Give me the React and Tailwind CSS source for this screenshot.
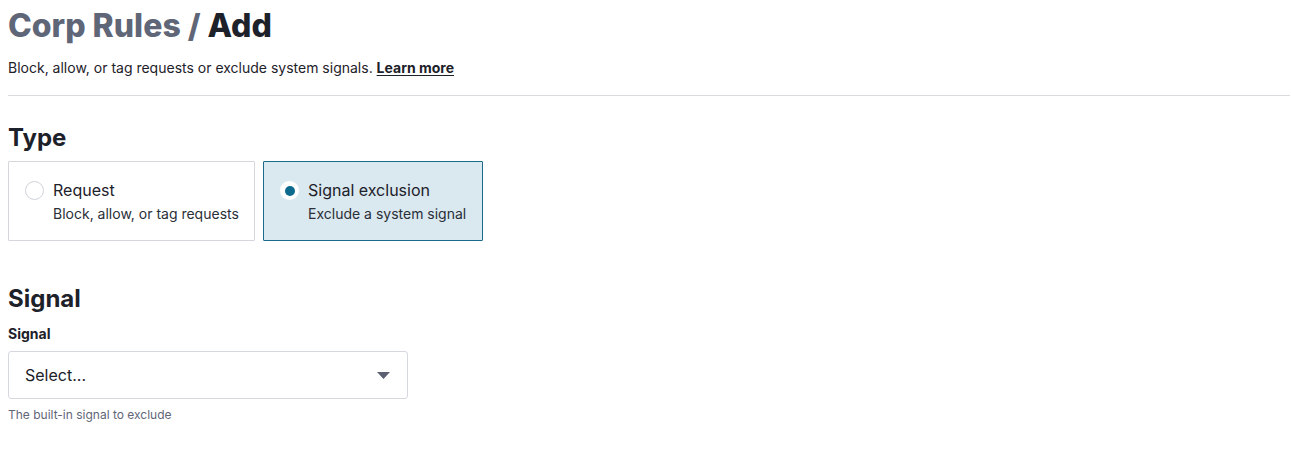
import { useState } from 'react';

const types = [
  { id: 'request', title: 'Request', desc: 'Block, allow, or tag requests', w: 'w-[247px]' },
  { id: 'signal', title: 'Signal exclusion', desc: 'Exclude a system signal', w: 'w-[220px]' },
];

const App = () => {
  const [type, setType] = useState('signal');

  return (
    <div className="min-h-screen bg-white pl-2 pr-px text-[#1d2129] font-['Inter',sans-serif]">
      <header className="pt-[6px]">
        <h1 className="text-[32px] font-extrabold leading-[40px]">
          <span className="text-[#5f6677]">Corp Rules / </span>
          <span>Add</span>
        </h1>
        <p className="mt-[13px] text-[14px] leading-[18px] text-[#1d2129]">
          Block, allow, or tag requests or exclude system signals.{' '}
          <a href="#" className="font-bold underline underline-offset-2">Learn more</a>
        </p>
      </header>

      <hr className="mt-[18px] border-t border-[#d9d9de]" />

      <section className="mt-[27px]">
        <h2 className="text-[24px] font-bold leading-[30px]">Type</h2>
        <div className="mt-[8px] flex gap-2">
          {types.map((t) => {
            const active = type === t.id;
            return (
              <button
                key={t.id}
                onClick={() => setType(t.id)}
                className={`${t.w} h-[80px] flex items-start gap-[9px] rounded-[1px] border px-[16px] pt-[18px] text-left whitespace-nowrap ${
                  active ? 'border-[#1b6a8b] bg-[#dae8ef]' : 'border-[#d5d7dc] bg-white'
                }`}
              >
                <span
                  className={`mt-[1px] flex h-[19px] w-[19px] shrink-0 items-center justify-center rounded-full bg-white ${
                    active ? '' : 'border border-[#cfd3da]'
                  }`}
                >
                  {active && <span className="h-[10px] w-[10px] rounded-full bg-[#0b6a8e]" />}
                </span>
                <span className="flex flex-col">
                  <span className="text-[16px] leading-[20px] text-[#1d2129]">{t.title}</span>
                  <span className="mt-[5px] text-[14px] leading-[18px] text-[#2a2f38]">{t.desc}</span>
                </span>
              </button>
            );
          })}
        </div>
      </section>

      <section className="mt-[43px]">
        <h2 className="text-[24px] font-bold leading-[30px]">Signal</h2>
        <label className="mt-[11px] block text-[14px] font-bold leading-[18px]">Signal</label>
        <div className="mt-[8px] flex h-[48px] w-[400px] items-center justify-between rounded-[3px] border border-[#d5d8de] pl-[16px] pr-[17px]">
          <span className="text-[16px] text-[#1d2129]">Select...</span>
          <svg width="13" height="7" viewBox="0 0 13 7">
            <path d="M0 0h13L6.5 7z" fill="#5b6170" />
          </svg>
        </div>
        <p className="mt-[8px] text-[12px] leading-[16px] text-[#5f6677]">The built-in signal to exclude</p>
      </section>
    </div>
  );
};

export default App;
